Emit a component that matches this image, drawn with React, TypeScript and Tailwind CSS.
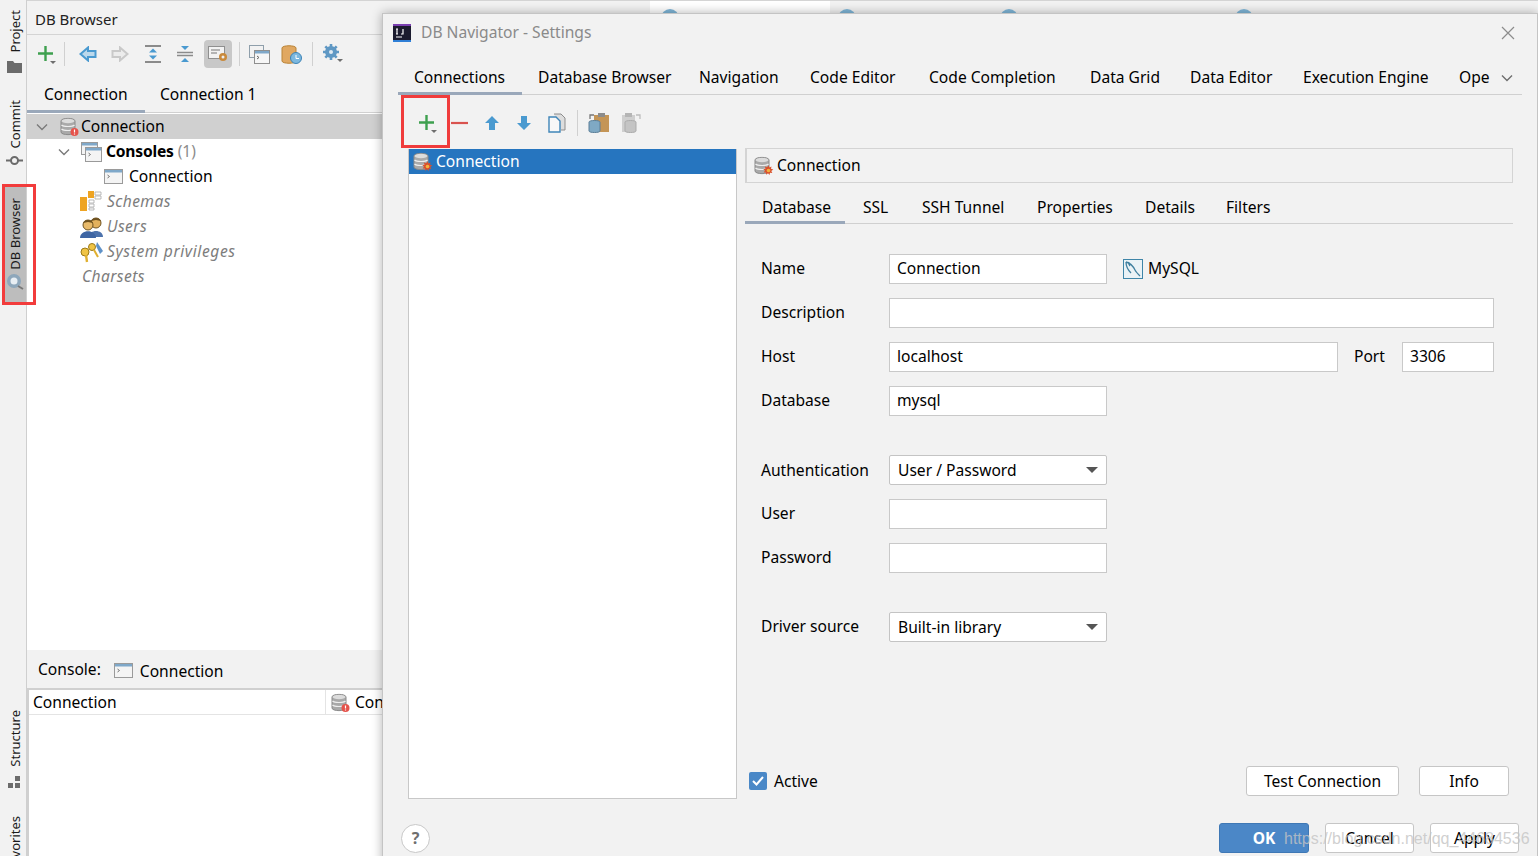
import React from "react";

const Ic = ({ w = 20, h = 20, vb, children, cls = "" }: { w?: number; h?: number; vb?: string; children: React.ReactNode; cls?: string }) => (
  <svg width={w} height={h} viewBox={vb ?? `0 0 ${w} ${h}`} className={`shrink-0 ${cls}`}>
    {children}
  </svg>
);

const Caret = () => <path d="M0 0h6l-3 3z" fill="#6e6e6e" />;

const Plus = () => (
  <Ic w={22} h={24}>
    <path d="M9.500 4v15M2 11.500h15" stroke="#3ea04f" strokeWidth="2.400" fill="none" />
    <g transform="translate(14 19)"><Caret /></g>
  </Ic>
);

const DbIcon = ({ badge }: { badge: "err" | "gear" | "none" }) => (
  <Ic w={20} h={20}>
    <path d="M1 4c0-3.500 14-3.500 14 0v11c0 3.500-14 3.500-14 0z" fill="#a9a9a9" stroke="#8a8a8a" />
    <ellipse cx="8" cy="4" rx="6.500" ry="2.200" fill="#dcdcdc" />
    <path d="M1.500 8c2 2 11 2 13 0M1.500 12c2 2 11 2 13 0" stroke="#eeeeee" strokeWidth="1.200" fill="none" />
    {badge === "err" && (
      <>
        <circle cx="14.500" cy="15" r="4" fill="#e5534b" />
        <path d="M14.500 12.500v3M14.500 16.400v1" stroke="#fff" strokeWidth="1.200" />
      </>
    )}
    {badge === "gear" && (
      <>
        <path d="M14.500 9.500l1 2 2-1-.5 2.300 2.300.7-2 1.500 1 2-2.300-.3-.5 2.300-1.500-1.800-1.800 1.500-.2-2.300-2.300.2 1.300-2-1.800-1.300 2.300-.6-.6-2.200 2.100.8z" fill="#d9512c" />
        <circle cx="14.500" cy="14.500" r="1.800" fill="#f2b33d" />
      </>
    )}
  </Ic>
);

const ConsoleIcon = ({ w = 19 }: { w?: number }) => (
  <Ic w={w} h={15}>
    <rect x="0.500" y="0.500" width={w - 1} height="14" fill="#f4f4f4" stroke="#9a9a9a" />
    <rect x="1" y="1" width={w - 2} height="2.500" fill="#7fa8c9" />
    <path d="M3.500 6l2 1.500-2 1.500" stroke="#777" fill="none" />
  </Ic>
);

const ConsolesIcon = () => (
  <Ic w={21} h={20}>
    <rect x="0.500" y="0.500" width="16" height="12" fill="#f4f4f4" stroke="#9a9a9a" />
    <rect x="1" y="1" width="15" height="2.500" fill="#7fa8c9" />
    <rect x="4.500" y="5.500" width="16" height="14" fill="#f4f4f4" stroke="#9a9a9a" />
    <rect x="5" y="6" width="15" height="2.500" fill="#7fa8c9" />
    <path d="M7.500 11l2 1.500-2 1.500" stroke="#777" fill="none" />
  </Ic>
);

const ChevD = ({ c = "#7a7a7a" }: { c?: string }) => (
  <Ic w={12} h={8}>
    <path d="M1 1.500l5 5 5-5" stroke={c} strokeWidth="1.400" fill="none" />
  </Ic>
);

const VText = ({ label }: { label: string }) => (
  <span className="[writing-mode:vertical-rl] rotate-180 text-[13px] leading-[20px] text-[#1a1a1a] whitespace-nowrap shrink-0">{label}</span>
);

const Row = ({ pad, h = 25, children, cls = "" }: { pad: number; h?: number; children: React.ReactNode; cls?: string }) => (
  <div className={`flex items-center shrink-0 ${cls}`} style={{ paddingLeft: pad, height: h }}>
    {children}
  </div>
);

const Field = ({ v = "", w }: { v?: string; w: string }) => (
  <div className={`h-[30px] ${w} bg-white border border-[#c9c9c9] pl-[7px] flex items-center text-black shrink-0`}>{v}</div>
);

const Select = ({ v }: { v: string }) => (
  <div className="h-[30px] w-[218px] bg-white border border-[#c4c4c4] rounded-[2px] pl-[8px] pr-[8px] flex items-center justify-between text-black shrink-0">
    <span className="pt-[1px]">{v}</span>
    <svg width="12" height="6" viewBox="0 0 12 6"><path d="M0 0h12l-6 6z" fill="#555" /></svg>
  </div>
);

const Btn = ({ t, w, primary }: { t: string; w: string; primary?: boolean }) => (
  <div className={`h-[30px] ${w} rounded-[3px] pt-[1px] flex items-center justify-center shrink-0 ${primary ? "bg-[#4b87c7] border border-[#3f78b5] text-white font-bold" : "bg-white border border-[#c6c6c6] text-black"}`}>{t}</div>
);

const Label = ({ t }: { t: string }) => <div className="w-[128px] shrink-0">{t}</div>;

const Sep = ({ h = "h-[24px]" }: { h?: string }) => <div className={`w-px ${h} bg-[#d0d0d0] shrink-0`} />;

const dialogTabs = [
  { t: "Connections", w: "w-[124px]" },
  { t: "Database Browser", w: "w-[161px]" },
  { t: "Navigation", w: "w-[111px]" },
  { t: "Code Editor", w: "w-[119px]" },
  { t: "Code Completion", w: "w-[161px]" },
  { t: "Data Grid", w: "w-[100px]" },
  { t: "Data Editor", w: "w-[113px]" },
  { t: "Execution Engine", w: "w-[156px]" },
  { t: "Ope", w: "w-[58px]" },
];

const detailTabs = [
  { t: "Database", w: "w-[100px] pl-[17px]" },
  { t: "SSL", w: "w-[59px] pl-[18px]" },
  { t: "SSH Tunnel", w: "w-[115px] pl-[18px]" },
  { t: "Properties", w: "w-[108px] pl-[18px]" },
  { t: "Details", w: "w-[81px] pl-[18px]" },
  { t: "Filters", w: "w-[80px] pl-[18px]" },
];

export default function App() {
  return (
    <div className="relative w-[1538px] h-[856px] overflow-hidden bg-[#f2f2f2] flex text-[15.600px] text-[#111] font-['Noto_Sans',sans-serif]">
      {/* Tool window strip */}
      <div className="w-[27px] shrink-0 border-r border-[#cfcfcf] flex flex-col h-full pt-[10px] overflow-hidden">
        <div className="flex flex-col items-center h-[90px] pl-[3px] gap-[8px] shrink-0">
          <VText label="Project" />
          <Ic w={15} h={13}><path d="M0 1h6l1.500 2H15v10H0z" fill="#6b6b6b" /></Ic>
        </div>
        <div className="flex flex-col items-center h-[85px] pl-[3px] gap-[7px] shrink-0">
          <VText label="Commit" />
          <Ic w={17} h={11}><circle cx="8.500" cy="5.500" r="3.500" fill="none" stroke="#6b6b6b" strokeWidth="2" /><path d="M0 5.500h5M12 5.500h5" stroke="#6b6b6b" strokeWidth="2" /></Ic>
        </div>
        <div className="flex flex-col items-center h-[119px] ml-[3px] w-[24px] bg-[#bdbdbd] pt-[13px] gap-[3px] shrink-0">
          <VText label="DB Browser" />
          <Ic w={18} h={17}><circle cx="8" cy="8" r="7" fill="#8ea7bb" /><circle cx="8" cy="8" r="3.500" fill="#e8eef3" /><path d="M12 13l5 3" stroke="#777" strokeWidth="2" /></Ic>
        </div>
        <div className="flex flex-col items-center mt-[406px] pl-[3px] gap-[9px] shrink-0">
          <VText label="Structure" />
          <Ic w={13} h={12}><path d="M7 0h5v5H7zM0 7h5v5H0zM7 7h5v5H7z" fill="#6b6b6b" /></Ic>
        </div>
        <div className="flex flex-col items-center mt-[28px] pl-[3px] shrink-0">
          <VText label="Favorites" />
        </div>
      </div>

      {/* DB Browser panel */}
      <div className="w-[356px] shrink-0 flex flex-col h-full">
        <div className="h-[35px] border-b border-t border-[#d4d4d4] pl-[8px] pt-[3px] flex items-center text-[15px] text-[#222] shrink-0">DB Browser</div>
        <div className="h-[36px] flex items-center pl-[9px] shrink-0 mt-px">
          <Plus />
          <div className="ml-[6px] mr-[14px]"><Sep /></div>
          <Ic w={18} h={16}><path d="M9 1.500L1.500 8 9 14.500V11h7.500V5H9z" fill="#bcd9ec" stroke="#4a9ad0" strokeWidth="2" /></Ic>
          <div className="w-[14px]" />
          <Ic w={18} h={16}><path d="M9 1.500L16.500 8 9 14.500V11H1.500V5H9z" fill="#ececec" stroke="#c9c9c9" strokeWidth="2" /></Ic>
          <div className="w-[15px]" />
          <Ic w={18} h={18}><path d="M1 1h16M1 17h16" stroke="#8b8b8b" strokeWidth="2" /><path d="M5 7.500l4-4 4 4zM5 10.500l4 4 4-4z" fill="#4a9ad0" /></Ic>
          <div className="w-[14px]" />
          <Ic w={18} h={18}><path d="M5 1l4 4 4-4zM5 17l4-4 4 4z" fill="#4a9ad0" /><path d="M1 7.500h16M1 10.500h16" stroke="#8b8b8b" strokeWidth="1.600" /></Ic>
          <div className="w-[10px]" />
          <div className="w-[28px] h-[28px] rounded-[4px] bg-[#c8c8c8] flex items-center justify-center">
            <Ic w={20} h={16}><rect x="0.500" y="0.500" width="16" height="12" fill="#f2f2f2" stroke="#8f8f8f" /><path d="M3 4h9M3 7h6" stroke="#777" /><circle cx="15" cy="11" r="4" fill="#c98a3c" /><circle cx="15" cy="11" r="1.500" fill="#eee" /></Ic>
          </div>
          <div className="ml-[7px] mr-[9px]"><Sep /></div>
          <Ic w={21} h={19}><rect x="0.500" y="0.500" width="14" height="12" fill="#f2f2f2" stroke="#8f9fab" /><rect x="5.500" y="5.500" width="15" height="13" fill="#f6f6f6" stroke="#8f8f8f" /><rect x="6" y="6" width="14" height="2.500" fill="#7fa8c9" /><path d="M8 11l2 1.500-2 1.500" stroke="#666" fill="none" /></Ic>
          <div className="w-[11px]" />
          <Ic w={21} h={19}><path d="M1 3c0-3 14-3 14 0v13c0 3-14 3-14 0z" fill="#e0a862" stroke="#b98438" /><circle cx="15" cy="13" r="5.500" fill="#7cb8df" stroke="#3d83b5" /><path d="M15 10v3.500h3" stroke="#fff" fill="none" /></Ic>
          <div className="mx-[10px]"><Sep /></div>
          <Ic w={22} h={20} cls="-ml-[1px]">
            <circle cx="9" cy="8" r="6" fill="#5f98c4" />
            <path d="M9 0v16M1 8h16M3.300 2.300l11.400 11.400M14.700 2.300L3.300 13.700" stroke="#5f98c4" strokeWidth="2.600" />
            <circle cx="9" cy="8" r="2" fill="#dfeaf3" />
            <g transform="translate(15 15)"><Caret /></g>
          </Ic>
        </div>
        <div className="h-[41px] border-b border-[#d0d0d0] flex items-end shrink-0">
          <div className="w-[118px] h-[30px] border-b-[3px] border-[#9aa8ba] pl-[17px] -mb-px text-black">Connection</div>
          <div className="pl-[15px] h-[30px] -mb-px text-black">Connection 1</div>
        </div>
        <div className="flex-1 bg-white flex flex-col pt-px text-black min-h-0">
          <Row pad={9} h={25} cls="bg-[#d0d0d0]">
            <ChevD />
            <div className="w-[12px]" />
            <DbIcon badge="err" />
            <span className="ml-[1px]">Connection</span>
          </Row>
          <Row pad={31}>
            <ChevD />
            <div className="w-[11px]" />
            <ConsolesIcon />
            <span className="font-bold ml-[4px] tracking-[-0.2px]">Consoles</span>
            <span className="ml-[4px] text-[#8c8c8c]">(1)</span>
          </Row>
          <Row pad={77}>
            <ConsoleIcon />
            <span className="ml-[6px]">Connection</span>
          </Row>
          <Row pad={53} cls="italic text-[#7d7d7d]">
            <Ic w={24} h={22}>
              <path d="M8 0h6v7H8zM0 6h7v14H0z" fill="#eea423" />
              <path d="M15 1h6v3h-6zM15 5h6v3h-6zM9 9h5v3H9zM9 13h5v3H9zM9 17h5v2H9z" fill="#fff" stroke="#aaa" strokeWidth=".8" />
            </Ic>
            <span className="ml-[3px] tracking-[0.4px]">Schemas</span>
          </Row>
          <Row pad={53} cls="italic text-[#7d7d7d]">
            <Ic w={24} h={22}>
              <path d="M9 21c0-8 14-8 14 0z" fill="#4d73ad" />
              <circle cx="16" cy="7" r="5" fill="#e3b15d" stroke="#6e5220" />
              <path d="M11 5c1-4 9-4 10 0l-5-1z" fill="#6e5220" />
              <path d="M0 22c0-9 16-9 16 0z" fill="#3e65a3" />
              <circle cx="8" cy="9" r="5" fill="#e8ba6a" stroke="#6e5220" />
              <path d="M3 7c1-4 9-4 10 0l-5-1z" fill="#6e5220" />
            </Ic>
            <span className="ml-[3px] tracking-[0.4px]">Users</span>
          </Row>
          <Row pad={53} cls="italic text-[#7d7d7d]">
            <Ic w={24} h={22}>
              <path d="M17 1l6 9-3 3-4-8z" fill="#5f92c8" />
              <circle cx="12" cy="6" r="3.500" fill="#f0c445" stroke="#9b7a1a" />
              <path d="M14 9l4 7" stroke="#e0b030" strokeWidth="2" />
              <circle cx="5" cy="11" r="4" fill="#f0c445" stroke="#9b7a1a" />
              <path d="M6 14l1 7" stroke="#e0b030" strokeWidth="2.400" />
            </Ic>
            <span className="ml-[3px] tracking-[0.6px]">System privileges</span>
          </Row>
          <Row pad={55} cls="italic text-[#7d7d7d] tracking-[0.4px]">Charsets</Row>
          <div className="flex-1" />
          <div className="h-[38px] bg-[#f2f2f2] flex items-center pl-[11px] shrink-0 pt-[3px] -mt-px">
            <span className="-mt-[2px]">Console:</span>
            <div className="ml-[13px]"><ConsoleIcon /></div>
            <span className="ml-[7px] mt-[2px]">Connection</span>
          </div>
          <div className="h-[168px] border-l-[2px] border-t-[2px] border-[#d0d0d0] shrink-0 bg-white">
            <div className="h-[25px] border-b border-[#e4e4e4] flex items-center">
              <div className="w-[297px] pl-[4px] pt-[1px] h-full flex items-center border-r border-[#e4e4e4] shrink-0">Connection</div>
              <div className="pl-[5px] pt-[1px] flex items-center gap-[4px]"><DbIcon badge="err" /><span>Connection</span></div>
            </div>
          </div>
        </div>
      </div>

      {/* Editor area behind the dialog */}
      <div className="flex-1 border-t border-[#d4d4d4] h-[14px] flex pl-[267px] overflow-hidden">
        <div className="w-[180px] h-full bg-white pl-[11px] pt-[8px]"><div className="w-[18px] h-[18px] rounded-full bg-[#7fb6d8]" /></div>
        <div className="w-[162px] h-full pl-[8px] pt-[8px]"><div className="w-[18px] h-[18px] rounded-full bg-[#7fb6d8]" /></div>
        <div className="w-[235px] h-full pl-[8px] pt-[8px]"><div className="w-[18px] h-[18px] rounded-full bg-[#7fb6d8]" /></div>
        <div className="h-full pl-[8px] pt-[8px]"><div className="w-[18px] h-[18px] rounded-full bg-[#7fb6d8]" /></div>
      </div>

      {/* Settings dialog */}
      <div className="absolute left-[382px] top-[13px] w-[1156px] h-[860px] bg-[#f2f2f2] border border-[#c4c4c4] shadow-[0_0_10px_rgba(0,0,0,0.3)] flex flex-col">
        <div className="h-[38px] flex items-center pl-[10px] pr-[22px] text-[#8a8a8a] shrink-0">
          <Ic w={18} h={18}>
            <rect width="18" height="18" fill="#1b1b2e" />
            <path d="M0 0h18v2H0z" fill="#7a3fb0" />
            <path d="M0 16h18v2H0z" fill="#2f7fd6" />
            <path d="M4 5v5M3 5h2M3 10h2M10 5v5l-2 0M3 13h6" stroke="#fff" strokeWidth="1.200" fill="none" />
          </Ic>
          <span className="ml-[10px]">DB Navigator - Settings</span>
          <div className="flex-1" />
          <Ic w={14} h={14}><path d="M1 1l12 12M13 1L1 13" stroke="#8c8c8c" strokeWidth="1.200" /></Ic>
        </div>

        <div className="mx-[15px] h-[43px] border-b border-[#d0d0d0] flex items-end shrink-0 text-black">
          {dialogTabs.map((d, i) => (
            <div key={d.t} className={`pl-[16px] h-[29px] -mb-px whitespace-nowrap shrink-0 ${d.w} ${i === 0 ? "border-b-[3px] border-[#9aa8ba]" : ""}`}>{d.t}</div>
          ))}
          <div className="h-[29px] pt-[8px] -mb-px"><ChevD c="#6e6e6e" /></div>
        </div>

        <div className="h-[54px] flex items-center pl-[34px] pt-[2px] shrink-0">
          <Plus />
          <div className="w-[12px]" />
          <Ic w={18} h={4}><path d="M0 2h17" stroke="#d9534f" strokeWidth="2.200" /></Ic>
          <div className="w-[15px]" />
          <Ic w={16} h={16}><path d="M8 1l7 7h-4v7H5V8H1z" fill="#4a9ad0" /></Ic>
          <div className="w-[16px]" />
          <Ic w={16} h={16}><path d="M8 15l7-7h-4V1H5v7H1z" fill="#4a9ad0" /></Ic>
          <div className="w-[16px]" />
          <Ic w={18} h={20}><path d="M6 1h7l4 4v12h-4" fill="#ddd" stroke="#8c8c8c" /><path d="M1 4h7l4 4v11H1z" fill="#f8f8f8" stroke="#3f85b8" strokeWidth="1.400" /></Ic>
          <div className="mx-[11px]"><Sep h="h-[26px]" /></div>
          <Ic w={22} h={22} cls="-ml-[1px]">
            <path d="M6 3h15v17H6z" fill="#c49556" />
            <rect x="10" y="1" width="7" height="4" fill="#8c8c8c" />
            <path d="M1 10c0-2 11-2 11 0v9c0 2-11 2-11 0z" fill="#7fa9c4" stroke="#5c7f98" />
            <path d="M2 7V3h4" stroke="#777" strokeWidth="1.300" fill="none" />
          </Ic>
          <div className="w-[10px]" />
          <Ic w={22} h={22}>
            <path d="M2 3h13v17H2z" fill="#cfcfcf" />
            <rect x="5" y="1" width="7" height="4" fill="#b5b5b5" />
            <path d="M5 10c0-2 11-2 11 0v9c0 2-11 2-11 0z" fill="#c4c4c4" stroke="#ababab" />
            <path d="M16 3h4v4" stroke="#bdbdbd" strokeWidth="1.300" fill="none" />
          </Ic>
        </div>

        <div className="flex-1 flex pl-[25px] pr-[24px] min-h-0 items-start">
          {/* connection list */}
          <div className="w-[329px] h-[650px] bg-white border border-[#c8c8c8] border-t-0 shrink-0 text-white">
            <div className="h-[25px] bg-[#2675bf] flex items-center pl-[4px] gap-[3px]">
              <DbIcon badge="gear" />
              <span className="pt-[1px]">Connection</span>
            </div>
          </div>

          <div className="ml-[8px] flex-1 flex flex-col h-[710px] text-black">
            <div className="h-[35px] border border-[#d4d4d4] border-l-2 flex items-center pl-[7px] gap-[3px] -mt-px shrink-0">
              <DbIcon badge="gear" />
              Connection
            </div>
            <div className="h-[41px] border-b border-[#d0d0d0] flex items-end shrink-0">
              {detailTabs.map((d, i) => (
                <div key={d.t} className={`h-[28px] -mb-px whitespace-nowrap shrink-0 ${d.w} ${i === 0 ? "border-b-[3px] border-[#9aa8ba]" : ""}`}>{d.t}</div>
              ))}
            </div>

            <div className="pl-[16px] pt-[30px] flex flex-col shrink-0">
              <div className="flex items-center h-[30px]">
                <Label t="Name" />
                <Field v="Connection" w="w-[218px]" />
                <Ic w={20} h={20} cls="ml-[16px]">
                  <rect x="0.500" y="0.500" width="19" height="19" fill="#eaf2f6" stroke="#3f85a8" />
                  <path d="M3 3c4 1 7 4 9 8 1 2 3 4 5 6M3 3c0 5 2 8 5 11M6 3c-1 2 0 3 1 4" stroke="#3f7f9f" strokeWidth="1.300" fill="none" />
                </Ic>
                <span className="ml-[5px]">MySQL</span>
              </div>
              <div className="flex items-center h-[30px] mt-[14px]">
                <Label t="Description" />
                <Field w="w-[605px]" />
              </div>
              <div className="flex items-center h-[30px] mt-[14px]">
                <Label t="Host" />
                <Field v="localhost" w="w-[449px]" />
                <span className="ml-[16px] w-[48px]">Port</span>
                <Field v="3306" w="w-[92px]" />
              </div>
              <div className="flex items-center h-[30px] mt-[14px]">
                <Label t="Database" />
                <Field v="mysql" w="w-[218px]" />
              </div>
              <div className="flex items-center h-[30px] mt-[39px]">
                <div className="w-[128px] shrink-0 pt-[1px]">Authentication</div>
                <Select v="User / Password" />
              </div>
              <div className="flex items-center h-[30px] mt-[14px]">
                <Label t="User" />
                <Field w="w-[218px]" />
              </div>
              <div className="flex items-center h-[30px] mt-[14px]">
                <Label t="Password" />
                <Field w="w-[218px]" />
              </div>
              <div className="flex items-center h-[30px] mt-[39px]">
                <Label t="Driver source" />
                <Select v="Built-in library" />
              </div>
            </div>

            <div className="flex items-center h-[30px] mt-[124px] pl-[4px] pr-[4px] shrink-0">
              <div className="w-[18px] h-[18px] rounded-[2px] bg-[#4a88c7] flex items-center justify-center">
                <svg width="12" height="10" viewBox="0 0 12 10"><path d="M1 5l3.500 3.500L11 1" stroke="#fff" strokeWidth="2" fill="none" /></svg>
              </div>
              <span className="ml-[7px] pt-[2px]">Active</span>
              <div className="flex-1" />
              <Btn t="Test Connection" w="w-[153px]" />
              <div className="w-[20px]" />
              <Btn t="Info" w="w-[90px]" />
            </div>
          </div>
        </div>

        <div className="absolute left-[18px] top-[809px] right-[18px] flex items-center text-black">
          <div className="w-[29px] h-[29px] rounded-full bg-white border border-[#c8c8c8] flex items-center justify-center font-bold text-[#6e6e6e] text-[16px]">?</div>
          <div className="flex-1" />
          <Btn t="OK" w="w-[90px]" primary />
          <div className="w-[16px]" />
          <Btn t="Cancel" w="w-[89px]" />
          <div className="w-[16px]" />
          <Btn t="Apply" w="w-[89px]" />
        </div>
      </div>

      {/* Red annotation boxes and watermark */}
      <div className="absolute left-[2px] top-[184px] w-[34px] h-[121px] border-[3px] border-[#f23c3c]" />
      <div className="absolute left-[401px] top-[95px] w-[49px] h-[53px] border-[3px] border-[#f03c3c]" />
      <div className="absolute left-[1284px] top-[827px] text-[16px] text-[#c4c4c4]/80 font-['Liberation_Sans',sans-serif] whitespace-nowrap">https://blog.csdn.net/qq_44684536</div>
    </div>
  );
}
